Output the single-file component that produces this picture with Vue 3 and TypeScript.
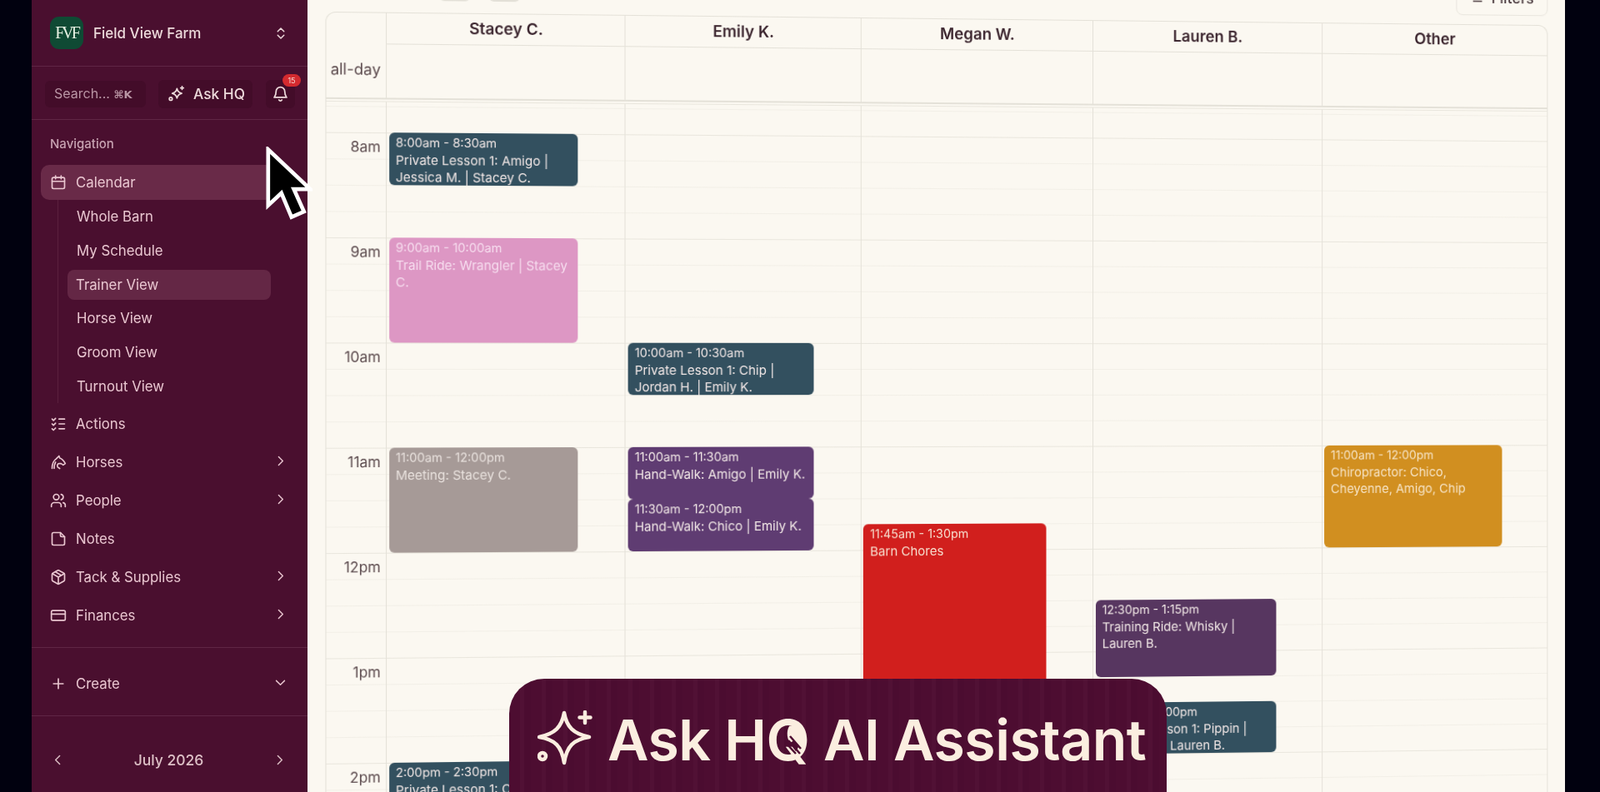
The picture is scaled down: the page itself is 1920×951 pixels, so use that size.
<template>
  <div class="page">
    <aside class="sidebar">
      <div class="farm">
        <div class="logo">FVF</div>
        <span class="farm-name">Field View Farm</span>
        <svg class="updown" viewBox="0 0 24 24"><path d="m7 9 5-5 5 5M7 15l5 5 5-5" /></svg>
      </div>

      <div class="tools">
        <div class="search">Search... <span class="kbd">⌘K</span></div>
        <div class="ask">
          <svg viewBox="0 0 24 24">
            <path d="M13 5c.8 4 2.500 5.700 6.500 6.500-4 .8-5.700 2.500-6.500 6.500-.8-4-2.500-5.700-6.500-6.500 4-.8 5.700-2.500 6.500-6.500Z" />
            <path d="M20 2v4M18 4h4" />
            <circle cx="4.500" cy="19" r="2" />
          </svg>
          Ask HQ
        </div>
        <div class="bell">
          <svg viewBox="0 0 24 24">
            <path d="M6 9a6 6 0 0 1 12 0c0 6 2.500 7.500 2.500 8h-17c0-.5 2.500-2 2.500-8Z" />
            <path d="M10 20.500a2.200 2.200 0 0 0 4 0" />
          </svg>
          <span class="badge">15</span>
        </div>
      </div>

      <nav class="nav">
        <div class="nav-label">Navigation</div>
        <div class="item active">
          <svg viewBox="0 0 24 24">
            <rect x="3" y="5" width="18" height="16" rx="2" />
            <path d="M8 2.500V7M16 2.500V7M3 10.500h18" />
          </svg>
          Calendar
        </div>
        <div class="subs">
          <div v-for="s in subItems" :key="s" class="sub" :class="{ current: s === 'Trainer View' }">
            <span>{{ s }}</span>
          </div>
        </div>

        <div v-for="n in navItems" :key="n.label" class="item">
          <svg viewBox="0 0 24 24"><path v-for="d in n.paths" :key="d" :d="d" /></svg>
          {{ n.label }}
          <svg v-if="n.more" class="chev" viewBox="0 0 24 24"><path d="m9 5 7 7-7 7" /></svg>
        </div>
      </nav>

      <div class="create">
        <div class="item">
          <svg viewBox="0 0 24 24"><path d="M12 5v14M5 12h14" /></svg>
          Create
          <svg class="chev" viewBox="0 0 24 24"><path d="m5 9 7 7 7-7" /></svg>
        </div>
      </div>

      <div class="month">
        <svg viewBox="0 0 24 24"><path d="m15 5-7 7 7 7" /></svg>
        <span>July 2026</span>
        <svg viewBox="0 0 24 24"><path d="m9 5 7 7-7 7" /></svg>
      </div>
    </aside>

    <main class="main">
      <div class="board">
        <div class="toolbar">
          <div class="tool-tabs"><span></span><span></span></div>
          <div class="filters">≡ &nbsp;Filters</div>
        </div>

        <div class="card">
          <div class="head">
            <div class="corner">all-day</div>
            <div v-for="c in columns" :key="c.name" class="name">{{ c.name }}</div>
            <div v-for="c in columns" :key="c.name + '-all'" class="allday"></div>
          </div>
          <div class="body">
            <div class="times">
              <div v-for="h in hours" :key="h" class="hour">{{ h }}</div>
            </div>
            <div v-for="c in columns" :key="c.name" class="col">
              <div
                v-for="e in c.events"
                :key="e.time"
                class="event"
                :class="e.kind"
                :style="eventStyle(e)"
              >
                <div class="event-time">{{ e.time }}</div>
                <div>{{ e.title }}</div>
              </div>
            </div>
          </div>
        </div>
      </div>
    </main>

    <svg class="cursor" viewBox="0 0 60 95">
      <path d="M3 3v72l17-16 13 31 16-7-13-29h21Z" />
    </svg>

    <div class="banner">
      <svg class="spark" viewBox="0 0 66 66">
        <path d="M32 3c3 17 11 25 30 29-19 3-27 11-30 31-3-20-11-28-30-31 19-4 27-12 30-29Z" />
        <path d="M57 2v13M50.500 8.500h13" />
        <circle cx="6" cy="55" r="4" />
      </svg>
      <span class="banner-text">Ask H<span class="q">Q<svg viewBox="0 0 40 44"><path d="M15 3c7-2 15 3 17 12 1 5 1 9 0 12l-5 1-6-8-5 3c-3-4-5-13-1-20Z" /><path class="mane" d="m14 20 14 16M11 23l12 13M16 15l13 15" /></svg></span> AI Assistant</span>
    </div>
  </div>
</template>

<script setup lang="ts">
type EventKind = 'teal' | 'pink' | 'grey' | 'purple' | 'plum' | 'red' | 'orange'

interface CalEvent {
  start: number
  end: number
  time: string
  title: string
  kind: EventKind
}

interface Column {
  name: string
  events: CalEvent[]
}

interface NavItem {
  label: string
  more: boolean
  paths: string[]
}

const hourHeight = 124
const firstHourOffset = 36

const subItems = ['Whole Barn', 'My Schedule', 'Trainer View', 'Horse View', 'Groom View', 'Turnout View']

const navItems: NavItem[] = [
  {
    label: 'Actions',
    more: false,
    paths: ['M13 5h8M13 12h8M13 19h8', 'm3 5 2 2 3-3', 'm3 12 2 2 3-3', 'M3 19l2 2 3-3'],
  },
  {
    label: 'Horses',
    more: true,
    paths: [
      'M3 21c0-6 1.500-11 6-14l4-4 1 3c3 1 6 4 8 8l-3 2-3-2h-3c-2 0-3 2-2 5l3 2',
      'M8 12c-1.500 2.500-2 5.500-2 9',
    ],
  },
  {
    label: 'People',
    more: true,
    paths: [
      'M16 21v-2a4 4 0 0 0-4-4H6a4 4 0 0 0-4 4v2',
      'M9 3a4 4 0 1 0 0 8 4 4 0 0 0 0-8Z',
      'M22 21v-2a4 4 0 0 0-3-3.900M16 3.100a4 4 0 0 1 0 7.800',
    ],
  },
  {
    label: 'Notes',
    more: false,
    paths: ['M15 3H5a2 2 0 0 0-2 2v14a2 2 0 0 0 2 2h14a2 2 0 0 0 2-2V9Z', 'M15 3v4a2 2 0 0 0 2 2h4'],
  },
  {
    label: 'Tack & Supplies',
    more: true,
    paths: [
      'M21 8a2 2 0 0 0-1-1.700l-7-4a2 2 0 0 0-2 0l-7 4A2 2 0 0 0 3 8v8a2 2 0 0 0 1 1.700l7 4a2 2 0 0 0 2 0l7-4a2 2 0 0 0 1-1.700Z',
      'M3.300 7 12 12l8.700-5M12 22V12M7.500 4.300l9 5.200',
    ],
  },
  {
    label: 'Finances',
    more: true,
    paths: ['M4 5h16a2 2 0 0 1 2 2v10a2 2 0 0 1-2 2H4a2 2 0 0 1-2-2V7a2 2 0 0 1 2-2Z', 'M2 10h20'],
  },
]

const hours = ['8am', '9am', '10am', '11am', '12pm', '1pm', '2pm']

const columns: Column[] = [
  {
    name: 'Stacey C.',
    events: [
      { start: 8, end: 8.5, time: '8:00am - 8:30am', title: 'Private Lesson 1: Amigo | Jessica M. | Stacey C.', kind: 'teal' },
      { start: 9, end: 10, time: '9:00am - 10:00am', title: 'Trail Ride: Wrangler | Stacey C.', kind: 'pink' },
      { start: 11, end: 12, time: '11:00am - 12:00pm', title: 'Meeting: Stacey C.', kind: 'grey' },
      { start: 14, end: 14.5, time: '2:00pm - 2:30pm', title: 'Private Lesson 1: Chico | Jessica M. | Stacey C.', kind: 'teal' },
    ],
  },
  {
    name: 'Emily K.',
    events: [
      { start: 10, end: 10.5, time: '10:00am - 10:30am', title: 'Private Lesson 1: Chip | Jordan H. | Emily K.', kind: 'teal' },
      { start: 11, end: 11.5, time: '11:00am - 11:30am', title: 'Hand-Walk: Amigo | Emily K.', kind: 'purple' },
      { start: 11.5, end: 12, time: '11:30am - 12:00pm', title: 'Hand-Walk: Chico | Emily K.', kind: 'purple' },
    ],
  },
  {
    name: 'Megan W.',
    events: [{ start: 11.75, end: 13.5, time: '11:45am - 1:30pm', title: 'Barn Chores', kind: 'red' }],
  },
  {
    name: 'Lauren B.',
    events: [
      { start: 12.5, end: 13.25, time: '12:30pm - 1:15pm', title: 'Training Ride: Whisky | Lauren B.', kind: 'plum' },
      { start: 13.5, end: 14, time: '1:30pm - 2:00pm', title: 'Private Lesson 1: Pippin | Jordan H. | Lauren B.', kind: 'teal' },
    ],
  },
  {
    name: 'Other',
    events: [{ start: 11, end: 12, time: '11:00am - 12:00pm', title: 'Chiropractor: Chico, Cheyenne, Amigo, Chip', kind: 'orange' }],
  },
]

function eventStyle(e: CalEvent) {
  return {
    top: `${firstHourOffset + (e.start - 8) * hourHeight}px`,
    height: `${(e.end - e.start) * hourHeight}px`,
  }
}
</script>

<style>
html,
body {
  margin: 0;
  background: #01010f;
}
</style>

<style scoped>
.page {
  position: relative;
  display: flex;
  width: 1920px;
  height: 951px;
  padding: 0 42px 0 38px;
  box-sizing: border-box;
  overflow: hidden;
  background: #01010f;
  font-family: Inter, 'Noto Sans', 'DejaVu Sans', sans-serif;
}

/* sidebar */
.sidebar {
  flex: 0 0 331px;
  display: flex;
  flex-direction: column;
  background: #4a0f2f;
  color: #e9c6d0;
  font-size: 16.800px;
  filter: blur(0.4px);
}

.sidebar svg {
  fill: none;
  stroke: currentColor;
  stroke-width: 2;
  stroke-linecap: round;
  stroke-linejoin: round;
}

.farm {
  display: flex;
  align-items: center;
  height: 79px;
  padding: 0 23px 0 22px;
  border-bottom: 1px solid #5f2645;
  color: #ecd9da;
}

.logo {
  display: flex;
  align-items: center;
  justify-content: center;
  width: 40px;
  height: 39px;
  margin-top: -1px;
  border-radius: 11px;
  background: #0f4a34;
  color: #e6f0e2;
  font-family: 'Liberation Serif', serif;
  font-size: 20px;
  letter-spacing: -3px;
}

.farm-name {
  flex: 1;
  margin-left: 12px;
  font-size: 17px;
  font-weight: 500;
}

.updown {
  width: 18px;
  height: 18px;
}

.tools {
  display: flex;
  align-items: center;
  height: 64px;
  padding: 2px 0 0 16px;
  border-bottom: 1px solid #5f2645;
  box-sizing: border-box;
}

.search {
  width: 121px;
  height: 32px;
  line-height: 30px;
  padding-left: 11px;
  box-sizing: border-box;
  border-radius: 6px;
  background: #430c29;
  color: #b995a4;
  font-size: 16px;
}

.kbd {
  font-size: 13px;
  font-weight: 600;
  font-family: 'DejaVu Sans', sans-serif;
}

.ask {
  display: flex;
  align-items: center;
  gap: 10px;
  width: 113px;
  height: 34px;
  margin-left: 15px;
  padding-left: 11px;
  box-sizing: border-box;
  border-radius: 6px;
  background: #430c29;
  color: #ecd9da;
  font-size: 17.300px;
  font-weight: 500;
}

.ask svg {
  width: 21px;
  height: 21px;
}

.bell {
  position: relative;
  width: 35px;
  height: 34px;
  margin-left: 16px;
  border-radius: 6px;
  background: #430c29;
  color: #ecd9da;
}

.bell svg {
  width: 21px;
  height: 21px;
  margin: 6px 0 0 7px;
}

.badge {
  position: absolute;
  top: -7px;
  left: 20px;
  width: 22px;
  height: 15px;
  border-radius: 8px;
  background: #d32a2f;
  color: #f6d5cf;
  font-size: 9px;
  line-height: 15px;
  text-align: center;
}

.nav {
  padding: 19px 0 0 11px;
}

.nav-label {
  height: 20px;
  margin: 0 0 15px 11px;
  color: #c7a2b1;
  font-size: 15px;
  font-weight: 500;
  line-height: 20px;
}

.item {
  display: flex;
  align-items: center;
  gap: 11px;
  height: 45.900px;
  padding: 0 24px 0 11px;
  box-sizing: border-box;
}

.item > svg:first-child {
  flex: none;
  width: 20px;
  height: 20px;
}

.item.active {
  width: 280px;
  height: 42px;
  border-radius: 10px;
  background: #692a48;
}

.chev {
  width: 17px;
  height: 17px;
  margin-left: auto;
  margin-top: -3px;
}

.subs {
  margin: 0 0 2px 20px;
  padding: 0 0 0 11px;
  border-left: 1px solid #5b1f3e;
}

.sub {
  display: flex;
  align-items: center;
  height: 40.700px;
}

.sub span {
  padding-left: 11px;
}

.sub.current span {
  display: block;
  width: 244px;
  height: 36px;
  box-sizing: border-box;
  line-height: 36px;
  padding-left: 10px;
  border-radius: 8px;
  background: #642745;
}

.create {
  height: 83px;
  margin-top: 16px;
  padding: 20px 0 0 11px;
  box-sizing: border-box;
  border-top: 1px solid #5f2645;
  border-bottom: 1px solid #5f2645;
}

.create .item {
  height: 46px;
}

.month {
  display: flex;
  align-items: center;
  justify-content: space-between;
  padding: 42px 25px 0 23px;
  color: #ddc0c6;
  font-size: 17.500px;
  font-weight: 500;
}

.month svg {
  width: 17px;
  height: 17px;
}

/* calendar */
.main {
  flex: 1;
  min-width: 0;
  padding: 0 6px 0 35px;
  background: #fbf8f1;
}

.board {
  width: 1468px;
  margin-top: -22px;
  transform: perspective(1000px) rotateY(1.500deg);
  transform-origin: 719px 467px;
  filter: blur(0.4px);
}

.toolbar {
  display: flex;
  align-items: flex-start;
  justify-content: space-between;
  height: 40px;
  margin-bottom: 4px;
}

.tool-tabs {
  display: flex;
  gap: 22px;
  padding: 0 0 0 132px;
}

.tool-tabs span {
  width: 36px;
  height: 30px;
  border-radius: 6px;
  background: #e3e0d7;
}

.filters {
  width: 114px;
  height: 33px;
  box-sizing: border-box;
  padding: 0 0 0 18px;
  border: 1px solid #e8e5dd;
  border-radius: 8px;
  color: #4a3a3e;
  font-size: 18px;
  font-weight: 500;
  line-height: 22px;
}

.card {
  border: 1px solid #e4e1d8;
  border-bottom: 0;
  border-radius: 12px 12px 0 0;
  color: #3d2730;
}

.head {
  display: grid;
  grid-template-columns: 69px repeat(5, 1fr);
  grid-template-rows: 37px 63px;
  border-bottom: 2px solid #e4e1d8;
}

.corner {
  grid-column: 1;
  grid-row: 1 / 3;
  padding: 56px 6px 0 0;
  box-sizing: border-box;
  text-align: right;
  color: #5b4a4d;
  font-size: 18px;
}

.name {
  border-left: 1px solid #e4e1d8;
  border-bottom: 1px solid #e4e1d8;
  font-size: 18.700px;
  font-weight: 600;
  line-height: 35px;
  text-align: center;
}

.allday {
  border-left: 1px solid #e4e1d8;
}

.body {
  display: grid;
  grid-template-columns: 69px repeat(5, 1fr);
  height: 1000px;
  margin-top: 2px;
  border-top: 1px solid #e9e6dd;
  background-image:
    linear-gradient(#e9e6dd 1px, transparent 1px),
    linear-gradient(#f2efe7 1px, transparent 1px);
  background-size:
    100% 124px,
    100% 31px;
  background-position:
    0 36px,
    0 5px;
}

.times {
  padding-top: 36px;
}

.hour {
  height: 124px;
  padding: 6px 6px 0 0;
  box-sizing: border-box;
  text-align: right;
  color: #5b4a4d;
  font-size: 17px;
  line-height: 22px;
}

.col {
  position: relative;
  border-left: 1px solid #e4e1d8;
}

.event {
  position: absolute;
  left: 2.500px;
  width: 220px;
  padding: 2px 4px 2px 8px;
  box-sizing: border-box;
  overflow: hidden;
  border-radius: 6px;
  color: #f1e7e6;
  font-size: 15px;
  line-height: 20.500px;
}

.event-time {
  font-size: 14.300px;
}

.event.teal {
  background: #33505f;
}

.event.pink {
  background: #dd97c4;
  color: #f6dcee;
}

.event.grey {
  background: #a69a97;
  color: #e8e1dd;
}

.event.purple {
  background: #5f3c72;
}

.event.plum {
  background: #573660;
}

.event.red {
  background: #d11f1d;
  color: #f6dccc;
}

.event.orange {
  background: #d18f20;
  color: #f6e3c4;
}

/* pointer and caption over the recording */
.cursor {
  position: absolute;
  top: 176px;
  left: 319px;
  width: 56px;
  height: 90px;
  fill: #000;
  stroke: #fff;
  stroke-width: 5;
  stroke-linejoin: miter;
}

.banner {
  position: absolute;
  top: 815px;
  left: 611px;
  display: flex;
  align-items: flex-start;
  width: 789px;
  height: 170px;
  padding: 38px 0 0 34px;
  box-sizing: border-box;
  border-radius: 42px 42px 0 0;
  background: repeating-linear-gradient(90deg, #4d0d31 0 13px, #511135 13px 18px, #4b0c30 18px 26px);
  color: #fbeee0;
}

.spark {
  flex: none;
  width: 66px;
  height: 66px;
  fill: none;
  stroke: #fbeee0;
  stroke-width: 4.500;
  stroke-linecap: round;
  stroke-linejoin: round;
}

.banner-text {
  margin-left: 18px;
  font-family: Inter, sans-serif;
  font-size: 68px;
  font-weight: 600;
  line-height: 70px;
  letter-spacing: -0.500px;
  white-space: nowrap;
}

.q {
  position: relative;
  display: inline-block;
}

.q svg {
  position: absolute;
  top: 16px;
  left: 13px;
  width: 40px;
  height: 44px;
}

.q svg path {
  fill: #fbeee0;
}

.q svg .mane {
  fill: none;
  stroke: #4d0d31;
  stroke-width: 2.500;
}
</style>
